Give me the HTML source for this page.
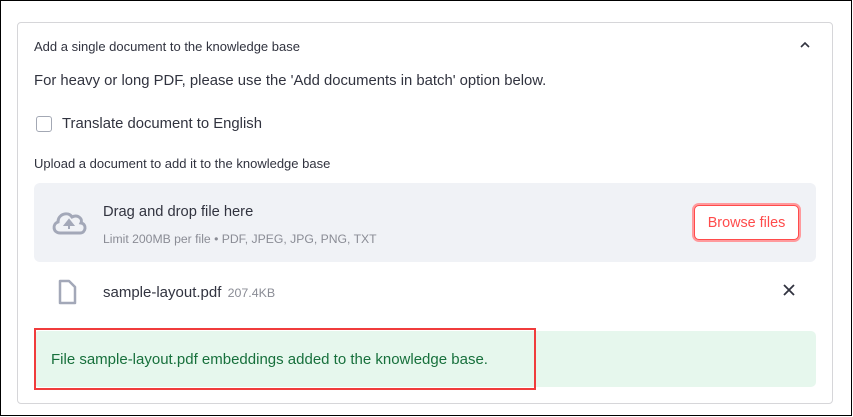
<!DOCTYPE html>
<html><head><style>
*{margin:0;padding:0;box-sizing:border-box}
body{width:853px;height:417px;background:#fff;font-family:"Liberation Sans",sans-serif;color:#31333f;position:relative;overflow:hidden}
.frame{position:absolute;left:0;top:0;width:852px;height:416px;border:1px solid #000}
.card{position:absolute;left:17px;top:22px;width:816px;height:382px;border:1px solid #d6d6d9;border-radius:4px}
.a{position:absolute;white-space:nowrap}
</style></head><body>
<div class="frame"></div>
<div class="card"></div>
<div class="a" style="left:34px;top:39px;font-size:13px">Add a single document to the knowledge base</div>
<svg class="a" style="left:799px;top:40px" width="12" height="10" viewBox="0 0 12 10"><path d="M2 7 L6 3 L10 7" stroke="#31333f" stroke-width="1.6" fill="none"/></svg>
<div class="a" style="left:34px;top:73px;font-size:14.85px">For heavy or long PDF, please use the 'Add documents in batch' option below.</div>
<div class="a" style="left:36px;top:116px;width:16px;height:16px;border:1.5px solid #a3a8b4;border-radius:3px"></div>
<div class="a" style="left:62px;top:116px;font-size:14.85px">Translate document to English</div>
<div class="a" style="left:34px;top:156px;font-size:13px">Upload a document to add it to the knowledge base</div>
<div class="a" style="left:34px;top:183px;width:782px;height:79px;background:#f0f2f6;border-radius:6px"></div>
<svg class="a" style="left:50px;top:208px" width="38" height="28" viewBox="0 0 38 28"><path d="M10 25 C3 25 2 16 8 14 C8 6 18 3 22 9 C28 6 33 11 31 15 C37 16 36 25 30 25 Z" stroke="#a3a8b8" stroke-width="3" fill="none"/><path d="M19 21 V15 M15 17 L19 12 L23 17 Z" stroke="#a3a8b8" stroke-width="2" fill="#a3a8b8"/></svg>
<div class="a" style="left:103px;top:204px;font-size:14.7px">Drag and drop file here</div>
<div class="a" style="left:103px;top:232px;font-size:12.2px;color:#8a8c95">Limit 200MB per file • PDF, JPEG, JPG, PNG, TXT</div>
<div class="a" style="left:692px;top:203px;width:109px;height:39px;border:3px solid #ff9a9d;border-radius:7px"></div>
<div class="a" style="left:694px;top:205px;width:105px;height:35px;border:1px solid #ff4b4b;border-radius:5px;background:#fff;color:#ff4b4b;font-size:14.4px;text-align:center;line-height:34px">Browse files</div>
<svg class="a" style="left:57px;top:279px" width="20" height="26" viewBox="0 0 20 26"><path d="M3 2 H12 L18 8 V24 H3 Z" stroke="#a3a8b8" stroke-width="2.5" fill="none" stroke-linejoin="round"/></svg>
<div class="a" style="left:103px;top:284px;font-size:15px">sample-layout.pdf <span style="font-size:12.4px;color:#8a8c95;margin-left:2px">207.4KB</span></div>
<svg class="a" style="left:782px;top:283px" width="14" height="14" viewBox="0 0 14 14"><path d="M2 2 L12 12 M12 2 L2 12" stroke="#31333f" stroke-width="1.8"/></svg>
<div class="a" style="left:34px;top:331px;width:782px;height:56px;background:#e6f7ed;border-radius:5px"></div>
<div class="a" style="left:34px;top:328px;width:502px;height:62px;border:2px solid #f03c3c"></div>
<div class="a" style="left:51px;top:351px;font-size:15px;color:#17703c">File sample-layout.pdf embeddings added to the knowledge base.</div>
</body></html>
